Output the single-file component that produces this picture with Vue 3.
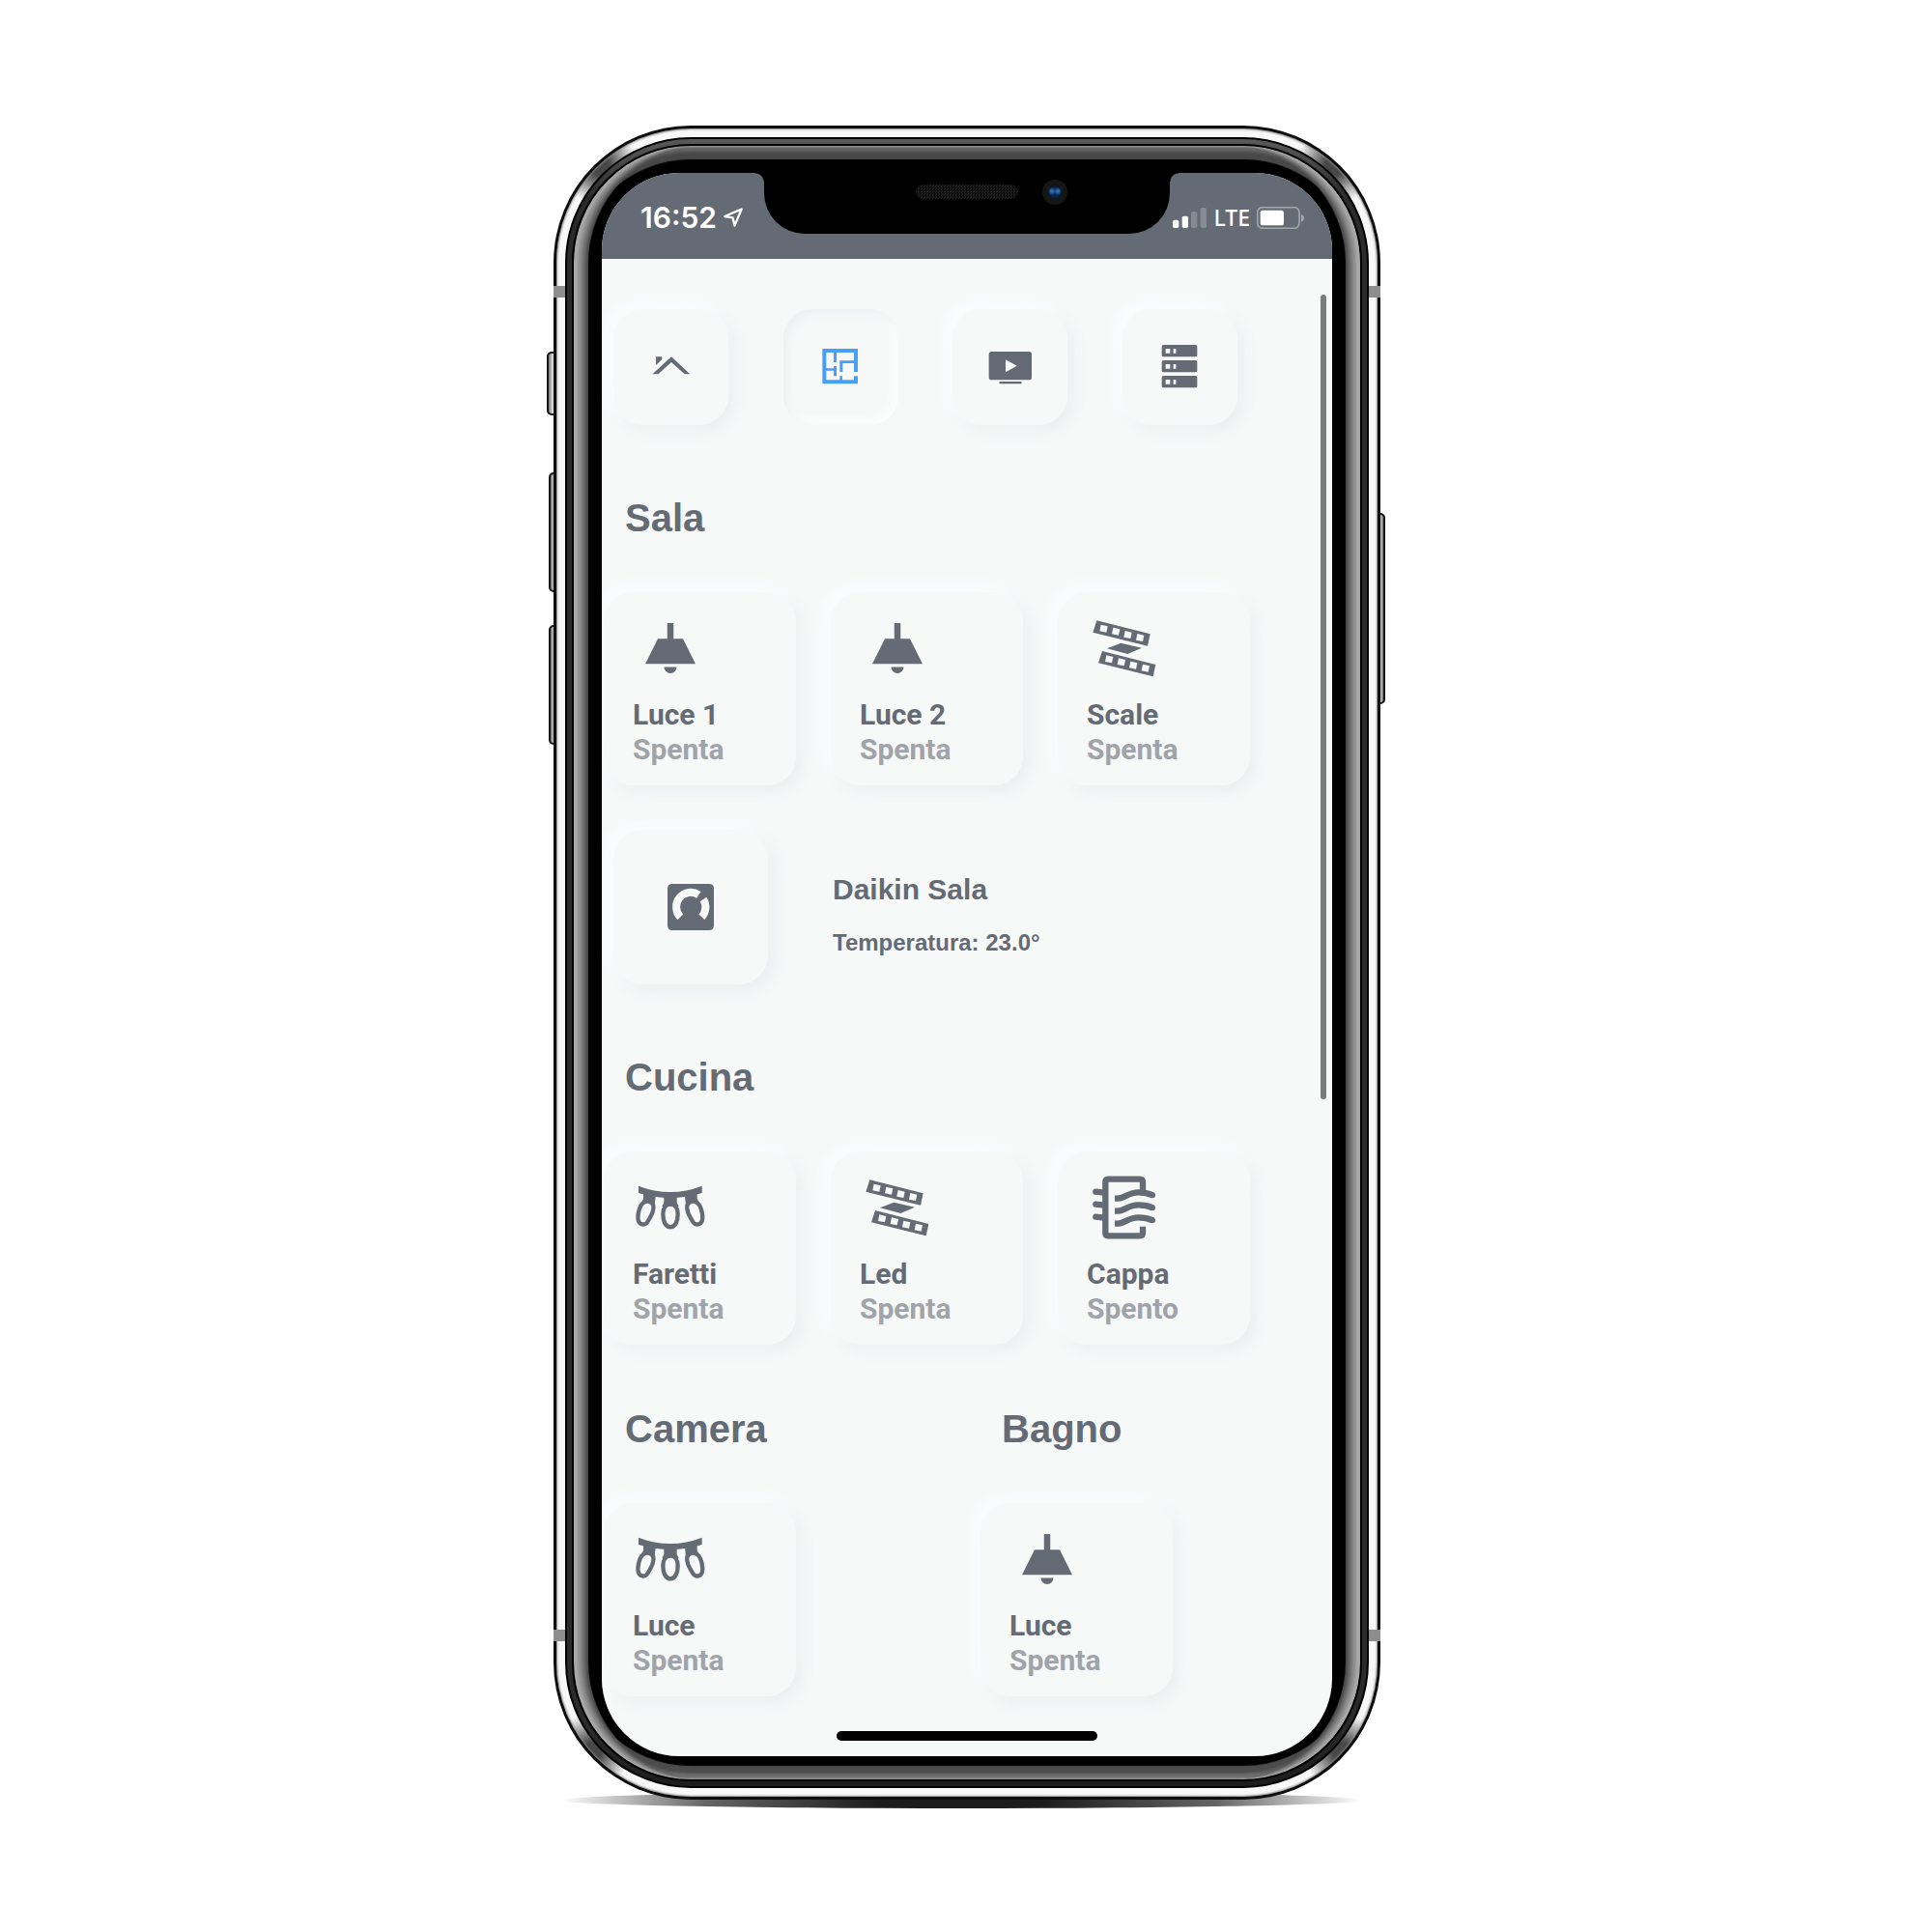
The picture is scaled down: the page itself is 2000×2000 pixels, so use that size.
<script setup>
import { ref } from 'vue'

const tabs = [
  { icon: 'home', label: 'Home' },
  { icon: 'plan', label: 'Stanze' },
  { icon: 'tv', label: 'Media' },
  { icon: 'server', label: 'Server' },
]
const active = ref('plan')

const sala = [
  { name: 'Luce 1', state: 'Spenta', icon: 'ceiling' },
  { name: 'Luce 2', state: 'Spenta', icon: 'ceiling' },
  { name: 'Scale', state: 'Spenta', icon: 'strip' },
]
const cucina = [
  { name: 'Faretti', state: 'Spenta', icon: 'string' },
  { name: 'Led', state: 'Spenta', icon: 'strip' },
  { name: 'Cappa', state: 'Spento', icon: 'hood' },
]
const pair = [
  { room: 'Camera', name: 'Luce', state: 'Spenta', icon: 'string' },
  { room: 'Bagno', name: 'Luce', state: 'Spenta', icon: 'ceiling' },
]
</script>

<template>
  <svg class="sprite" aria-hidden="true">
    <symbol id="home" viewBox="0 0 144 144">
      <path d="M13 94 72 40l58 54h-17L72 57 31 94zM24 40h19v8L24 66z" />
    </symbol>
    <symbol id="plan" viewBox="0 0 144 144">
      <path d="M16 15h110v12H16zM16 15h12v109H16zM16 112h110v12H16zM114 15h12v72h-12zM114 100h12v24h-12zM51 15h9v42h-9zM70 52h9v35h-9zM70 52h50v8H70zM22 76h36v7H22zM51 69h9v31h-9zM70 100h8v20h-8z" />
    </symbol>
    <symbol id="tv" viewBox="0 0 144 144">
      <path fill-rule="evenodd" d="M13 24h117a8 8 0 0 1 8 8v72a8 8 0 0 1-8 8H13a8 8 0 0 1-8-8V32a8 8 0 0 1 8-8zM57 49v39l35-20z" />
      <rect x="37" y="117" width="70" height="7" rx="3" />
    </symbol>
    <symbol id="server" viewBox="0 0 144 144">
      <path fill-rule="evenodd" d="M22 3h100a5 5 0 0 1 5 5v27a5 5 0 0 1-5 5H22a5 5 0 0 1-5-5V8a5 5 0 0 1 5-5zM29 15v14h14V15zM53 15v14h8V15z" />
      <path fill-rule="evenodd" d="M22 51h100a5 5 0 0 1 5 5v27a5 5 0 0 1-5 5H22a5 5 0 0 1-5-5V56a5 5 0 0 1 5-5zM29 63v14h14V63zM53 63v14h8V63z" />
      <path fill-rule="evenodd" d="M22 99h100a5 5 0 0 1 5 5v27a5 5 0 0 1-5 5H22a5 5 0 0 1-5-5v-27a5 5 0 0 1 5-5zM29 111v14h14v-14zM53 111v14h8v-14z" />
    </symbol>
    <symbol id="ceiling" viewBox="0 0 24 24">
      <path d="M8 9h3V4h2v5h3l4 8H4zM14 18a2 2 0 0 1-4 0z" />
    </symbol>
    <symbol id="strip" viewBox="0 0 234 234">
      <path fill-rule="evenodd" d="M31 31 197 73l-8 37L19 68zM44 44l-4 20 21 4 4-19zM82 53l-4 20 21 4 4-19zM119 63l-4 20 21 4 4-19zM157 72l-4 20 21 4 4-19z" />
      <path fill-rule="evenodd" transform="translate(17 95)" d="M31 31 197 73l-8 37L19 68zM44 44l-4 20 21 4 4-19zM82 53l-4 20 21 4 4-19zM119 63l-4 20 21 4 4-19zM157 72l-4 20 21 4 4-19z" />
      <path d="m106 101 65 15-44 19-64-17z" />
    </symbol>
    <symbol id="string" viewBox="0 0 234 234">
      <path d="M18 50Q117 88 215 50V72Q117 102 18 72z" />
      <path d="M33 74 71 82 68 110 25 106 33 90zM200 74 162 82 165 110 208 106 200 90zM97 82h40v20l6 12H91l6-12z" />
      <g fill="#f7f9f9" stroke="currentColor" stroke-width="13">
        <path d="M32 103C18 114 13 150 19 161 24 172 39 172 45 163 55 148 67 124 64 111 61 98 44 93 32 103z" />
        <path d="M201 103C215 114 220 150 214 161 209 172 194 172 188 163 178 148 166 124 169 111 172 98 189 93 201 103z" />
        <path d="M117 107C102 107 94 120 94 137 94 160 102 178 117 178 132 178 140 160 140 137 140 120 132 107 117 107z" />
      </g>
    </symbol>
    <symbol id="hood" viewBox="0 0 234 234">
      <g fill="none" stroke="currentColor" stroke-width="19">
        <path d="M174 70V38Q174 29 165 29H67Q58 29 58 38V196Q58 205 67 205H165Q174 205 174 196V176" />
        <path stroke-linecap="round" d="m28 68 26 3M28 107l26 3M28 146l26 3" />
        <path d="M87 89H93C118 89 128 70 160 70 182 70 192 73 205 79" />
        <path d="M87 128H93C118 128 128 109 160 109 182 109 192 112 205 118" />
        <path d="M87 167H93C118 167 128 148 160 148 182 148 192 151 205 157" />
      </g>
      <circle cx="204" cy="79" r="9" />
      <circle cx="204" cy="118" r="9" />
      <circle cx="204" cy="157" r="9" />
    </symbol>
    <symbol id="gauge" viewBox="0 0 144 144">
      <rect width="144" height="144" rx="14" />
      <path fill="none" stroke="#f7f9f9" stroke-width="24" d="M40 103A45 45 0 0 1 97 34M111 48A45 45 0 0 1 106 103" />
    </symbol>
  </svg>

  <main class="page">
    <div class="device">
      <i class="key mute"></i>
      <i class="key up"></i>
      <i class="key down"></i>
      <i class="key power"></i>
      <div class="phone">
        <div class="steel">
          <i class="band top"></i>
          <i class="band bottom"></i>
          <div class="rim">
            <div class="bevel">
              <div class="screen">
                <header class="status">
                  <div class="group">
                    <span class="time">16:52</span>
                    <svg class="arrow" viewBox="0 0 61 60">
                      <path d="M57 4 4 27 29 31 35 56z" fill="none" stroke="#fff" stroke-width="7" stroke-linejoin="round" />
                    </svg>
                  </div>
                  <div class="group">
                    <svg class="signal" viewBox="0 0 105 63">
                      <g fill="#fff">
                        <rect y="38" width="19" height="25" rx="5" />
                        <rect x="29" y="26" width="19" height="37" rx="5" />
                        <rect x="57" y="12" width="19" height="51" rx="5" opacity=".22" />
                        <rect x="86" width="19" height="63" rx="5" opacity=".22" />
                      </g>
                    </svg>
                    <span class="net">LTE</span>
                    <svg class="battery" viewBox="0 0 147 69">
                      <rect x="2" y="2" width="130" height="65" rx="16" fill="none" stroke="#a3a6ac" stroke-width="5" />
                      <rect x="11" y="11" width="73" height="47" rx="8" fill="#fff" />
                      <path d="M138 23q9 3 9 12t-9 12z" fill="#a3a6ac" />
                    </svg>
                  </div>
                </header>
                <div class="notch">
                  <i class="speaker"></i>
                  <i class="camera"></i>
                </div>
                <i class="scrollbar"></i>

                <div class="content">
                  <nav class="tabs">
                    <button
                      v-for="t in tabs"
                      :key="t.icon"
                      type="button"
                      class="tile tab"
                      :class="{ active: active === t.icon }"
                      :aria-label="t.label"
                      @click="active = t.icon"
                    >
                      <svg class="glyph"><use :href="'#' + t.icon" /></svg>
                    </button>
                  </nav>

                  <section class="room">
                    <h2>Sala</h2>
                    <div class="cards">
                      <button v-for="c in sala" :key="c.name" type="button" class="tile card">
                        <svg class="picto"><use :href="'#' + c.icon" /></svg>
                        <span class="name">{{ c.name }}</span>
                        <span class="state">{{ c.state }}</span>
                      </button>
                    </div>
                    <div class="climate">
                      <button type="button" class="tile dial" aria-label="Daikin Sala">
                        <svg class="glyph"><use href="#gauge" /></svg>
                      </button>
                      <div class="reading">
                        <h3>Daikin Sala</h3>
                        <p>Temperatura: 23.0°</p>
                      </div>
                    </div>
                  </section>

                  <section class="room">
                    <h2>Cucina</h2>
                    <div class="cards">
                      <button v-for="c in cucina" :key="c.name" type="button" class="tile card">
                        <svg class="picto"><use :href="'#' + c.icon" /></svg>
                        <span class="name">{{ c.name }}</span>
                        <span class="state">{{ c.state }}</span>
                      </button>
                    </div>
                  </section>

                  <div class="pair">
                    <section v-for="c in pair" :key="c.room">
                      <h2>{{ c.room }}</h2>
                      <div class="cards">
                        <button type="button" class="tile card">
                          <svg class="picto"><use :href="'#' + c.icon" /></svg>
                          <span class="name">{{ c.name }}</span>
                          <span class="state">{{ c.state }}</span>
                        </button>
                      </div>
                    </section>
                  </div>
                </div>
                <i class="indicator"></i>
              </div>
            </div>
          </div>
        </div>
      </div>
    </div>
  </main>
</template>

<style>
body {
  margin: 0;
  background: #fff;
}
</style>

<style scoped>
* {
  box-sizing: border-box;
}
.sprite {
  position: absolute;
  width: 0;
  height: 0;
}
.page {
  padding: 130px 0 136px;
  font-family: "Liberation Sans", Arial, sans-serif;
  color: #646b75;
}
.device {
  position: relative;
  max-width: 868px;
  margin: 0 auto;
  padding: 0 5px 0 7px;
}
.device::after {
  content: "";
  position: absolute;
  left: 14px;
  right: 24px;
  bottom: -9px;
  height: 17px;
  border-radius: 50%;
  background: linear-gradient(90deg, transparent, #666 18%, #1c1c1c 40%, #1c1c1c 60%, #666 82%, transparent);
}

/* hardware keys */
.key {
  position: absolute;
  width: 12px;
  border: 2px solid #161616;
  border-radius: 5px;
  background: linear-gradient(90deg, #777, #ddd 50%);
}
.mute {
  left: 0;
  top: 234px;
  height: 66px;
}
.up {
  left: 2px;
  top: 359px;
  height: 124px;
}
.down {
  left: 2px;
  top: 517px;
  height: 124px;
}
.power {
  right: 0;
  top: 401px;
  height: 198px;
  background: linear-gradient(90deg, #ddd 50%, #777);
}

/* body */
.phone {
  position: relative;
  z-index: 1;
  padding: 3px;
  border-radius: 142px;
  background: #0e0e0e;
}
.steel {
  position: relative;
  padding: 9px;
  border-radius: 139px;
  box-shadow: inset 0 0 2px 1px #8a8a8a;
  background:
    radial-gradient(circle at 44px 38px, #484848 10px, transparent 40px),
    radial-gradient(circle at calc(100% - 44px) 38px, #484848 10px, transparent 40px),
    radial-gradient(circle at 36px calc(100% - 46px), #484848 10px, transparent 40px),
    radial-gradient(circle at calc(100% - 36px) calc(100% - 46px), #484848 10px, transparent 40px),
    #f8f8f8;
}
.band {
  position: absolute;
  left: -3px;
  right: -3px;
  height: 12px;
  background: #8d8d8d;
}
.band.top {
  top: 163px;
}
.band.bottom {
  bottom: 161px;
}
.rim {
  position: relative;
  padding: 5px;
  border: 2px solid #000;
  border-radius: 130px;
  background: linear-gradient(#5a5a5a, #2a2a2a 60px, #2a2a2a calc(100% - 60px), #1c1c1c);
}
.bevel {
  padding: 28px 29px 24px;
  border: 2px solid #000;
  border-radius: 123px;
  background: #000;
  box-shadow:
    inset 4px 0 2px #a8a8a8,
    inset -4px 0 2px #a8a8a8,
    inset 8px 0 3px #929292,
    inset -8px 0 3px #929292,
    inset 12px 0 3px #707070,
    inset -12px 0 3px #707070,
    inset 15px 0 1px #4c4c4c,
    inset -15px 0 1px #4c4c4c,
    inset 0 6px 3px #646464,
    inset 0 -6px 3px #707070,
    inset 0 14px 1px #484848,
    inset 0 -14px 1px #4c4c4c;
}
.screen {
  position: relative;
  overflow: hidden;
  border-radius: 80px;
  background: #f7f9f9;
}

/* status bar */
.status {
  display: flex;
  justify-content: space-between;
  height: 89px;
  padding: 32px 29px 0 40px;
  background: #656b75;
  color: #fff;
}
.group {
  display: flex;
  align-items: center;
  gap: 7px;
  height: 28px;
}
.time {
  font: 600 30px/28px Inter, sans-serif;
}
.net {
  font: 500 23px/28px "Noto Sans", sans-serif;
}
.arrow {
  width: 20px;
  height: 20px;
}
.signal {
  width: 35px;
  height: 21px;
}
.battery {
  width: 49px;
  height: 23px;
}
.notch {
  position: absolute;
  top: 0;
  left: 50%;
  width: 420px;
  height: 63px;
  margin-left: -210px;
  border-radius: 0 0 42px 42px;
  background: #000;
}
.notch::before,
.notch::after {
  content: "";
  position: absolute;
  top: 0;
  width: 9px;
  height: 9px;
}
.notch::before {
  right: 100%;
  background: radial-gradient(circle at 0 100%, transparent 8px, #000 9px);
}
.notch::after {
  left: 100%;
  background: radial-gradient(circle at 100% 100%, transparent 8px, #000 9px);
}
.speaker {
  position: absolute;
  left: 157px;
  top: 12px;
  width: 106px;
  height: 15px;
  border-radius: 8px;
  background: repeating-conic-gradient(#0c0c0c 0 25%, #202020 0 50%) 0 0 / 3px 3px;
}
.camera {
  position: absolute;
  left: 288px;
  top: 7px;
  width: 26px;
  height: 26px;
  border-radius: 50%;
  background:
    radial-gradient(circle at 10px 12px, #2d6fb5 1px, transparent 4px),
    radial-gradient(circle at 16px 12px, #2d6fb5 1px, transparent 4px),
    radial-gradient(circle at 50% 50%, #0d2446 5px, #0a1424 7px, #161616 8px);
}
.scrollbar {
  position: absolute;
  top: 126px;
  right: 6px;
  width: 6px;
  height: 833px;
  border-radius: 3px;
  background: #7b7d7d;
}
.indicator {
  position: absolute;
  left: 50%;
  bottom: 16px;
  width: 270px;
  height: 10px;
  margin-left: -135px;
  border-radius: 5px;
  background: #000;
}

/* content */
.content {
  padding: 52px 0 62px;
}
.tile {
  padding: 0;
  border: 0;
  border-radius: 30px;
  background: #f7f9f9;
  color: inherit;
  box-shadow: -6px -6px 16px #fcfcfe, 6px 6px 16px #ebecee;
}
.tabs {
  display: grid;
  grid-template-columns: repeat(4, 1fr);
  padding: 0 42px 0 12px;
}
.tab,
.dial {
  display: grid;
  place-items: center;
}
.tab {
  width: 119px;
  height: 120px;
}
.tab.active {
  color: #479ff8;
  box-shadow: inset 5px 5px 10px #eff0f2, inset -5px -5px 10px #fdfdfd;
}
.glyph {
  width: 48px;
  height: 48px;
  fill: currentColor;
}
.room {
  margin-top: 73px;
}
h2 {
  margin: 0 0 54px;
  padding-left: 24px;
  font-size: 40px;
  line-height: 46px;
}
.cards {
  display: flex;
  gap: 36px;
  padding-left: 2px;
}
.card {
  display: flex;
  flex-direction: column;
  align-items: flex-start;
  width: 199px;
  height: 200px;
  padding: 19px 30px;
  font: 700 30px/36px Roboto, sans-serif;
}
.picto {
  width: 78px;
  height: 78px;
  margin-bottom: 12px;
  fill: currentColor;
}
.state {
  color: #a0a4aa;
}
.climate {
  display: flex;
  align-items: center;
  gap: 67px;
  margin-top: 46px;
  padding-left: 12px;
}
.dial {
  width: 160px;
  height: 160px;
}
.reading {
  padding-top: 16px;
}
h3 {
  margin: 0 0 24px;
  font-size: 30px;
  line-height: 34px;
}
p {
  margin: 0;
  font-size: 24px;
  font-weight: 700;
  line-height: 28px;
}
.pair {
  display: grid;
  grid-template-columns: 390px 1fr;
  margin-top: 64px;
}
</style>
